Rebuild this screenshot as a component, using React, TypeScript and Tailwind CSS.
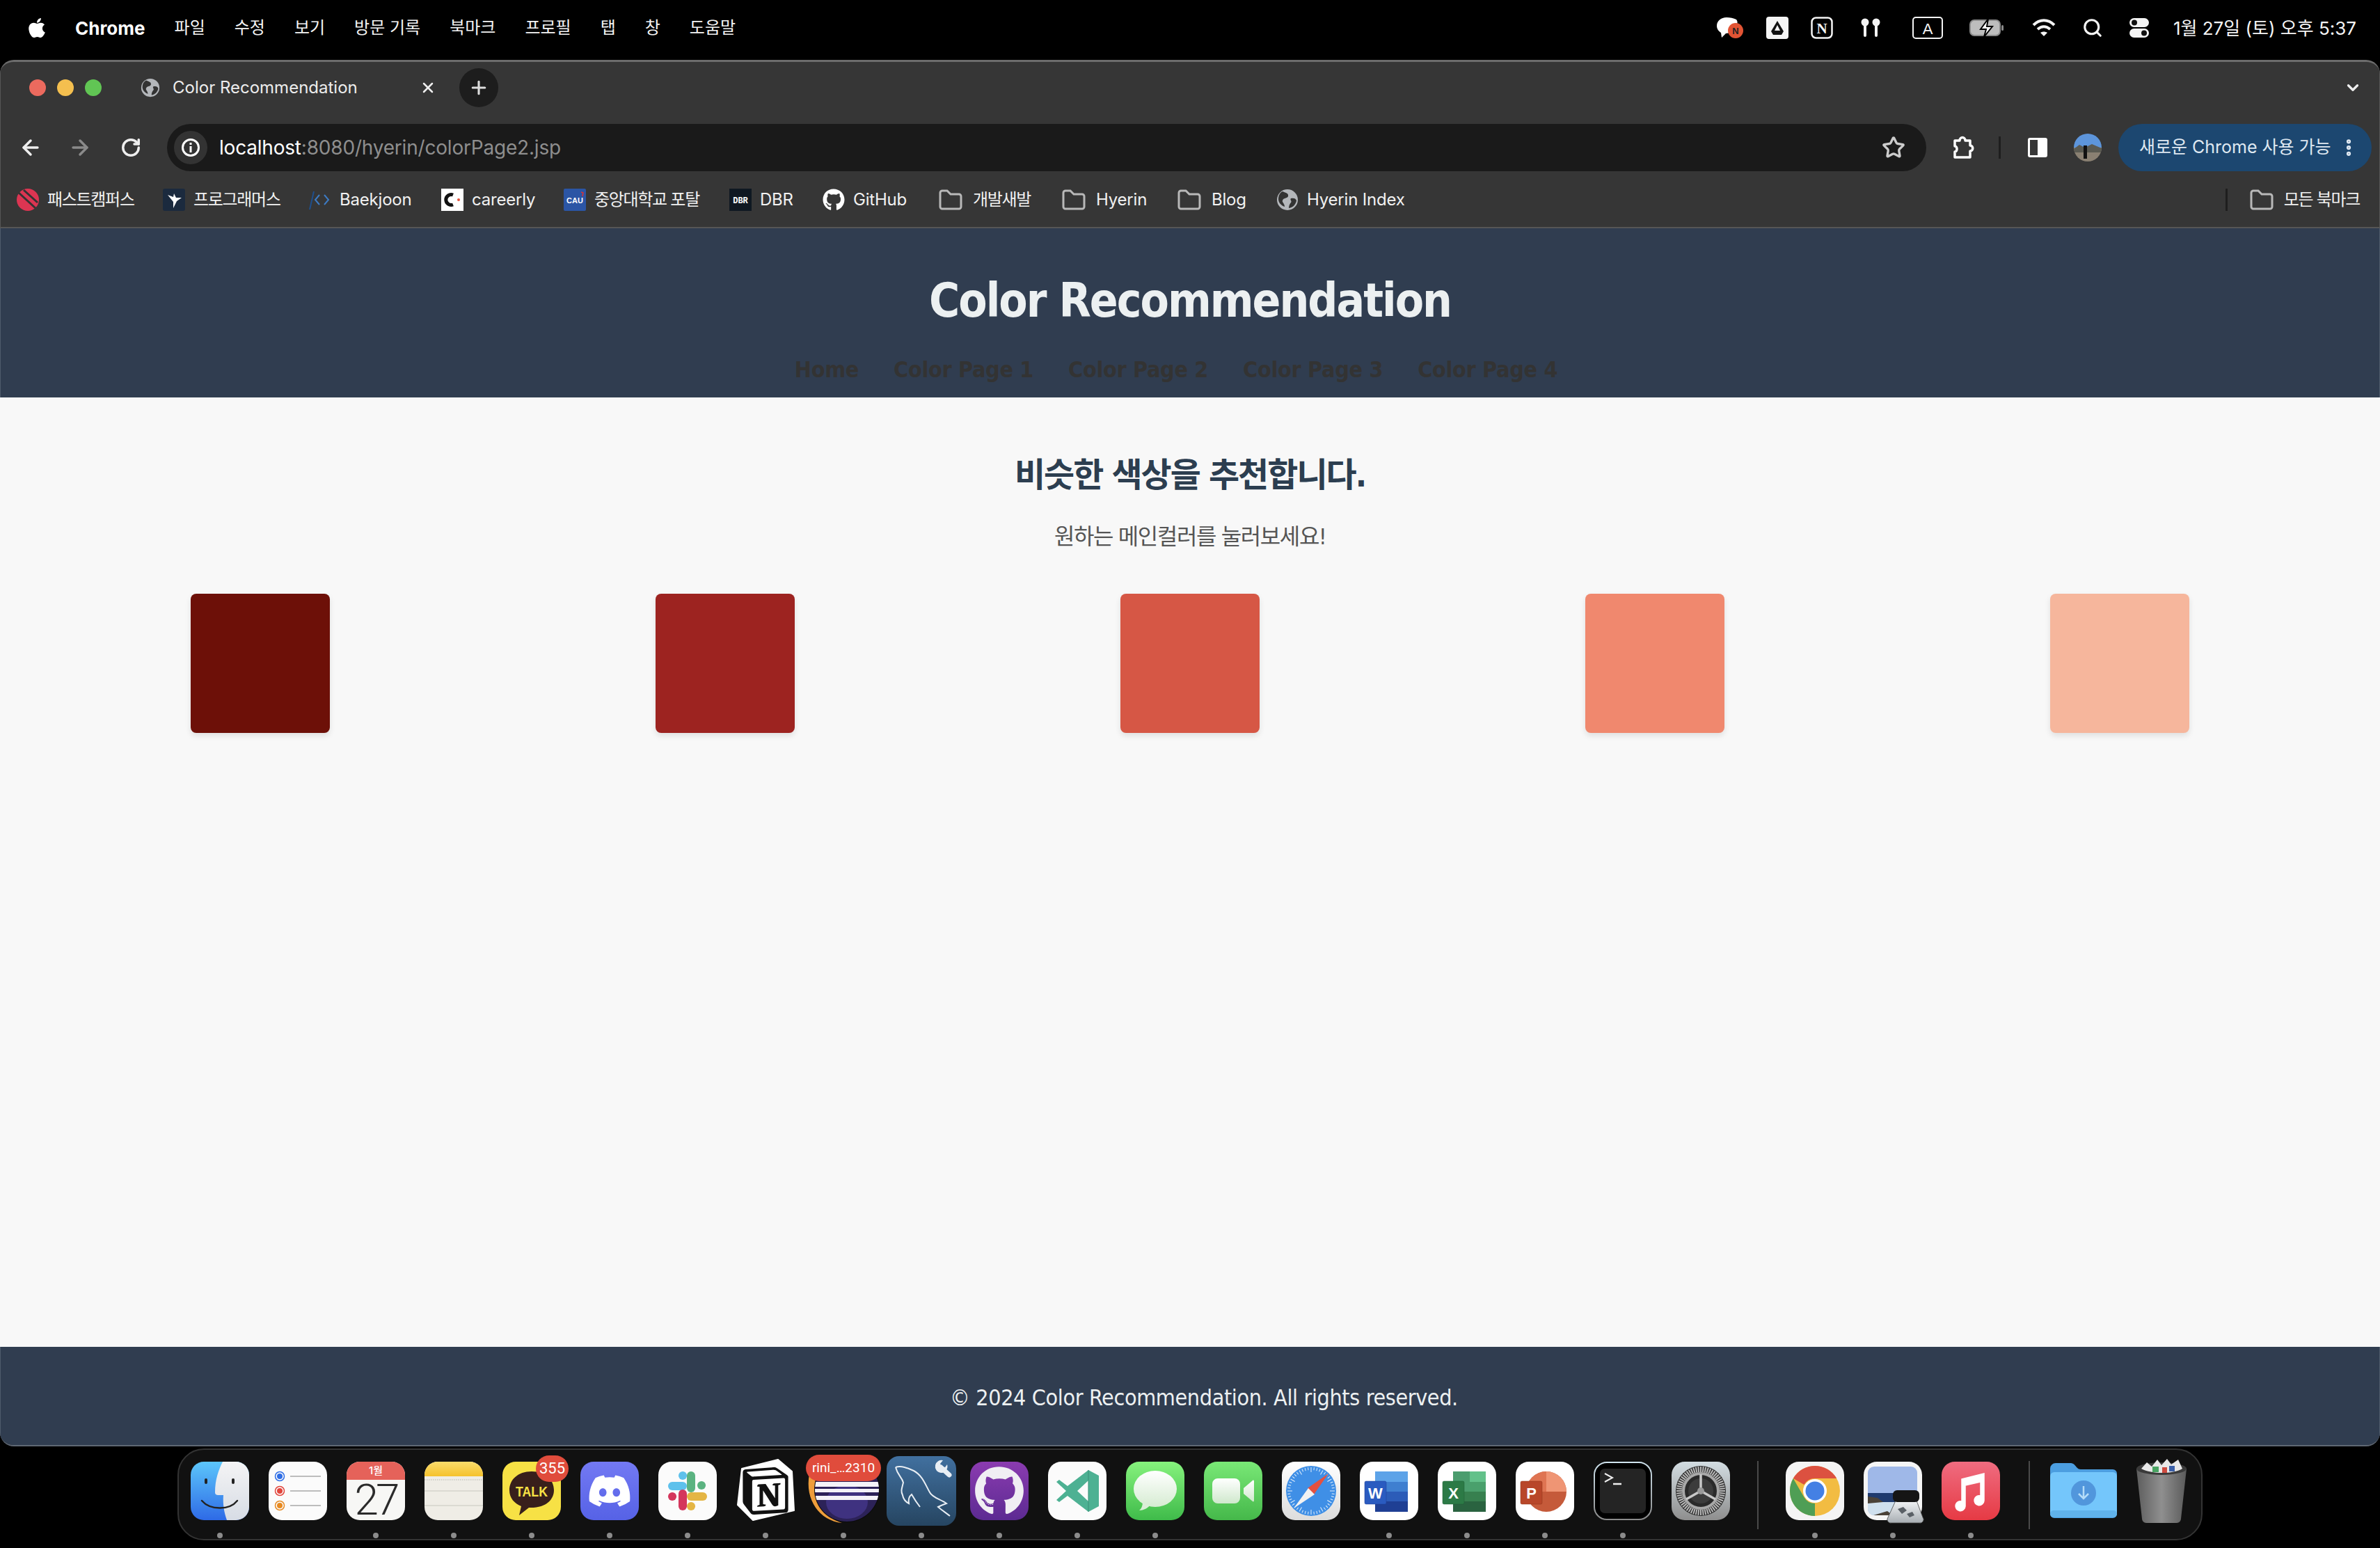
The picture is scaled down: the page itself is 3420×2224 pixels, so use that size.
import React from "react";
import { FaApple, FaGithub, FaDiscord } from "react-icons/fa";
import { SiNotion } from "react-icons/si";
import { ArrowLeft, ArrowRight, RotateCw, Star, ChevronDown, EllipsisVertical, Search, X, Plus } from "lucide-react";

const ui = "[font-family:'Inter','Noto_Sans_CJK_KR',sans-serif]";
const page = "[font-family:'DejaVu_Sans','Noto_Sans_CJK_KR',sans-serif] [font-stretch:condensed]";

function Globe({ size = 32 }: { size?: number }) {
  return (
    <svg width={size} height={size} viewBox="0 0 32 32">
      <circle cx="16" cy="16" r="15" fill="#b4b7bb" />
      <path d="M9 4c5 2 9 3 8 7-1 3-7 2-8 6-1 3 3 4 3 9-5-2-9-6-9-11 0-5 2-9 6-11zM21 14c4-1 7 0 8 3-1 6-5 10-11 11 0-3 1-6 3-8 2-2-2-4 0-6z" fill="#333" />
    </svg>
  );
}

function FolderIcon() {
  return (
    <svg width="34" height="32" viewBox="0 0 34 32" fill="none" stroke="#b8b8b8" strokeWidth="3">
      <path d="M2 6a3 3 0 0 1 3-3h7l5 5h12a3 3 0 0 1 3 3v15a3 3 0 0 1-3 3H5a3 3 0 0 1-3-3z" />
    </svg>
  );
}

function BmFast() {
  return (
    <svg width="32" height="32" viewBox="0 0 32 32">
      <circle cx="16" cy="16" r="16" fill="#dc3552" />
      <path d="M3 6l24 22M10 2l20 18" stroke="#333" strokeWidth="3" />
    </svg>
  );
}
function BmProg() {
  return (
    <svg width="32" height="32" viewBox="0 0 32 32">
      <rect width="32" height="32" rx="3" fill="#1b2a3e" />
      <path d="M7 9l8 3 1-5 3 6 8 0-7 5-5 10 0-9z" fill="#fff" />
    </svg>
  );
}
function BmBoj() {
  return (
    <svg width="32" height="32" viewBox="0 0 32 32" fill="none" strokeWidth="2">
      <path d="M7 4L1 30" stroke="#1f4f8c" />
      <path d="M15 9l-6 7 6 7M22 9l6 7-6 7" stroke="#3d7bc4" />
    </svg>
  );
}
function BmCareerly() {
  return (
    <svg width="32" height="32" viewBox="0 0 32 32">
      <rect width="32" height="32" fill="#fff" />
      <path d="M17 9a7.5 7.5 0 1 0 0 14" fill="none" stroke="#111" strokeWidth="5" />
      <circle cx="25" cy="16" r="2" fill="#e5533d" />
    </svg>
  );
}
function BmCau() {
  return (
    <svg width="32" height="32" viewBox="0 0 32 32">
      <rect width="32" height="32" rx="2" fill="#2b55a5" />
      <text x="16" y="21" textAnchor="middle" fontFamily="Liberation Sans" fontWeight="700" fontSize="11" fill="#fff">CAU</text>
      <path d="M25 5l3 1-1 5" stroke="#d33" strokeWidth="1.5" fill="none" />
    </svg>
  );
}
function BmDbr() {
  return (
    <svg width="32" height="32" viewBox="0 0 32 32">
      <rect width="32" height="32" fill="#0f1822" />
      <text x="16" y="21" textAnchor="middle" fontFamily="Liberation Mono" fontWeight="700" fontSize="12" fill="#fff">DBR</text>
    </svg>
  );
}

function Bm({ icon, label, w, gap = 12, ko = false }: { icon: React.ReactNode; label: string; w?: number; gap?: number; ko?: boolean }) {
  return (
    <div className="flex items-center shrink-0 text-[24px] leading-[32px] text-[#f1f1f1]" style={{ width: w, gap }}>
      {icon}
      <span className={`whitespace-nowrap ${ko ? "tracking-[-1.3px]" : "tracking-[-0.2px]"}`}>{label}</span>
    </div>
  );
}

const sq = 19;

function Finder() {
  return (
    <svg width="84" height="84" viewBox="0 0 84 84">
      <defs>
        <linearGradient id="fb" x1="0" y1="0" x2="0" y2="1"><stop offset="0" stopColor="#5cc6fb" /><stop offset="1" stopColor="#2e6ae6" /></linearGradient>
        <linearGradient id="fw" x1="0" y1="0" x2="0" y2="1"><stop offset="0" stopColor="#f4f4f5" /><stop offset="1" stopColor="#d7dce5" /></linearGradient>
        <clipPath id="fc"><rect width="84" height="84" rx={sq} /></clipPath>
      </defs>
      <g clipPath="url(#fc)">
        <rect width="84" height="84" fill="url(#fb)" />
        <path d="M46 0C40 12 35 26 35 44c0 3 2 4 5 4h7c-1 13 1 25 5 36h32V0z" fill="url(#fw)" />
      </g>
      <rect x="20" y="24" width="4" height="8" rx="2" fill="#222" />
      <rect x="59" y="24" width="4" height="8" rx="2" fill="#222" />
      <path d="M16 56c12 14 40 14 51 0" fill="none" stroke="#222" strokeWidth="2.4" strokeLinecap="round" />
    </svg>
  );
}
function Reminders() {
  const rows: [number, string][] = [[21, "#2f6ee6"], [42, "#e2453c"], [63, "#e78a22"]];
  return (
    <svg width="84" height="84" viewBox="0 0 84 84">
      <rect width="84" height="84" rx={sq} fill="#fbfbfb" />
      {rows.map(([y, c]) => (
        <g key={y}>
          <circle cx="16" cy={y} r="6.5" fill="none" stroke={c} strokeWidth="1.5" />
          <circle cx="16" cy={y} r="4" fill={c} />
          <rect x="31" y={y - 1} width="44" height="2" fill="#bdbdbd" />
        </g>
      ))}
    </svg>
  );
}
function Calendar() {
  return (
    <div className="w-[84px] h-[84px] rounded-[19px] bg-[#f7f7f5] flex flex-col items-center">
      <div className="w-full h-[26px] shrink-0 rounded-t-[19px] bg-[#e5625a] text-white text-[15px] leading-[26px] text-center font-medium">1월</div>
      <div className="h-[58px] text-[#2b2b2b] text-[62px] leading-[58px] font-light tracking-[-4px] [font-family:'Roboto',sans-serif]">27</div>
    </div>
  );
}
function Notes() {
  return (
    <svg width="84" height="84" viewBox="0 0 84 84">
      <defs>
        <clipPath id="nc"><rect width="84" height="84" rx={sq} /></clipPath>
        <linearGradient id="ny" x1="0" y1="0" x2="0" y2="1"><stop offset="0" stopColor="#fbdc6c" /><stop offset="1" stopColor="#f5c22c" /></linearGradient>
      </defs>
      <g clipPath="url(#nc)">
        <rect width="84" height="84" fill="#efede6" />
        <rect width="84" height="21" fill="url(#ny)" />
        <path d="M0 26h84" stroke="#c8c6c0" strokeWidth="1.5" strokeDasharray="1.5 1.5" />
        <path d="M0 42h84M0 63h84" stroke="#d5d3cc" strokeWidth="1.5" />
      </g>
    </svg>
  );
}
function Kakao() {
  return (
    <svg width="84" height="84" viewBox="0 0 84 84">
      <rect width="84" height="84" rx={sq} fill="#f7e145" />
      <path d="M42 14c-20 0-32 12-32 27 0 11 7 19 17 23l-3 13 14-11c25 1 36-12 36-25 0-15-12-27-32-27z" fill="#381f1b" />
      <text x="42" y="50" textAnchor="middle" fontSize="21" fontWeight="700" fill="#f7e145" fontFamily="Liberation Sans" textLength="46" lengthAdjust="spacingAndGlyphs">TALK</text>
    </svg>
  );
}
function Discord() {
  return (
    <div className="w-[84px] h-[84px] rounded-[19px] bg-gradient-to-b from-[#7379f3] to-[#5662e6] flex items-center justify-center">
      <FaDiscord size={64} color="#fff" />
    </div>
  );
}
function Slack() {
  return (
    <svg width="84" height="84" viewBox="0 0 84 84">
      <rect width="84" height="84" rx={sq} fill="#fbfbfb" />
      <g strokeLinecap="round" strokeWidth="12" fill="none">
        <path d="M47 20v18" stroke="#5bb381" /><path d="M62 34h.1" stroke="#5bb381" />
        <path d="M20 35h15" stroke="#5ec1ec" /><path d="M35 20h.1" stroke="#5ec1ec" />
        <path d="M35 46v18" stroke="#d4365c" /><path d="M20 50h.1" stroke="#d4365c" />
        <path d="M47 50h17" stroke="#e4b544" /><path d="M47 64h.1" stroke="#e4b544" />
      </g>
    </svg>
  );
}
function Notion() {
  return (
    <div className="relative w-[84px] h-[84px] flex items-center justify-center">
      <svg className="absolute left-0 top-0 overflow-visible" width="84" height="84" viewBox="0 0 84 84">
        <polygon points="8,10 60,-3 80,14 83,70 24,84 2,62" fill="#fff" stroke="#fff" strokeWidth="2" strokeLinejoin="round" />
      </svg>
      <SiNotion size={68} color="#111" className="relative" />
    </div>
  );
}
function Eclipse() {
  return (
    <svg width="84" height="84" viewBox="0 0 84 84" className="overflow-visible">
      <defs>
        <clipPath id="ec"><circle cx="47" cy="40" r="46" /></clipPath>
      </defs>
      <path d="M-7 18C-14 55 8 85 40 88 14 80-4 55 3 18z" fill="#ee9d3b" />
      <circle cx="47" cy="40" r="47" fill="#0b0b0b" />
      <g clipPath="url(#ec)">
        <rect x="0" y="-8" width="100" height="96" fill="#2c2258" />
        <ellipse cx="47" cy="58" rx="30" ry="24" fill="#3f3280" />
        <rect x="0" y="29" width="100" height="7" fill="#f4f3f8" />
        <rect x="0" y="39" width="100" height="5" fill="#f4f3f8" />
        <rect x="0" y="49" width="100" height="6" fill="#f4f3f8" />
      </g>
    </svg>
  );
}
function MySql() {
  return (
    <svg width="100" height="100" viewBox="0 0 100 100">
      <defs><linearGradient id="my" x1="0" y1="0" x2="0" y2="1"><stop offset="0" stopColor="#41709f" /><stop offset="1" stopColor="#264561" /></linearGradient></defs>
      <rect width="100" height="100" rx="18" fill="url(#my)" />
      <path d="M13 16C22 13 32 18 39 21 52 28 56 42 62 52 66 60 78 62 86 68 80 70 76 72 74 73 80 78 86 82 91 86" fill="none" stroke="#e8eef4" strokeWidth="2" />
      <path d="M13 16C16 28 22 30 24 38 22 46 20 50 23 56 24 62 28 66 32 68 31 62 32 58 36 55 40 62 44 68 48 73" fill="none" stroke="#e8eef4" strokeWidth="2" />
      <path d="M78 16L90 27" stroke="#e8eef4" strokeWidth="7" strokeLinecap="round" />
      <path d="M70 13a9 9 0 0 1 11-7l-4 5 2 4 5 1 3-4a9 9 0 0 1-9 12 9 9 0 0 1-8-11z" fill="#e8eef4" />
    </svg>
  );
}
function GitHubDock() {
  return (
    <div className="w-[84px] h-[84px] rounded-[19px] bg-gradient-to-b from-[#8b3bb0] to-[#5c2a92] flex items-center justify-center">
      <FaGithub size={72} color="#f0eef3" />
    </div>
  );
}
function VsCode() {
  return (
    <svg width="84" height="84" viewBox="0 0 84 84">
      <rect width="84" height="84" rx={sq} fill="#fbfbfb" />
      <path d="M58 12l15 8v44l-15 8-30-23-12 9-4-3 14-13-14-13 4-3 12 9zM58 27L42 42l16 15z" fill="#4db193" fillRule="evenodd" />
      <path d="M58 12v60" stroke="#3a8f77" strokeWidth="1" />
    </svg>
  );
}
function Messages() {
  return (
    <svg width="84" height="84" viewBox="0 0 84 84">
      <defs>
        <linearGradient id="ms" x1="0" y1="0" x2="0" y2="1"><stop offset="0" stopColor="#86f27d" /><stop offset="1" stopColor="#3fbb4a" /></linearGradient>
        <linearGradient id="mb" x1="0" y1="0" x2="0" y2="1"><stop offset="0" stopColor="#fff" /><stop offset="1" stopColor="#d6ecd2" /></linearGradient>
      </defs>
      <rect width="84" height="84" rx={sq} fill="url(#ms)" />
      <ellipse cx="42" cy="39" rx="31" ry="26" fill="url(#mb)" />
      <path d="M24 58c0 5-2 10-5 12 6 0 12-3 15-7z" fill="#dbeed8" />
    </svg>
  );
}
function FaceTime() {
  return (
    <svg width="84" height="84" viewBox="0 0 84 84">
      <defs>
        <linearGradient id="ft" x1="0" y1="0" x2="0" y2="1"><stop offset="0" stopColor="#79e876" /><stop offset="1" stopColor="#45b84a" /></linearGradient>
        <linearGradient id="fv" x1="0" y1="0" x2="0" y2="1"><stop offset="0" stopColor="#fff" /><stop offset="1" stopColor="#cfe8cc" /></linearGradient>
      </defs>
      <rect width="84" height="84" rx={sq} fill="url(#ft)" />
      <rect x="12" y="24" width="40" height="36" rx="8" fill="url(#fv)" />
      <path d="M57 38l13-11c1-1 2 0 2 1v28c0 1-1 2-2 1L57 46z" fill="url(#fv)" />
    </svg>
  );
}
function Safari() {
  const ticks = Array.from({ length: 48 }, (_, i) => i * 7.5);
  return (
    <svg width="84" height="84" viewBox="0 0 84 84">
      <defs><linearGradient id="sf" x1="0" y1="0" x2="0" y2="1"><stop offset="0" stopColor="#fff" /><stop offset="1" stopColor="#dcdcdc" /></linearGradient></defs>
      <rect width="84" height="84" rx={sq} fill="url(#sf)" />
      <circle cx="42" cy="42" r="36" fill="#3f8fe6" />
      {ticks.map((a) => (
        <rect key={a} x="41.5" y="8" width="1" height={a % 30 === 0 ? 7 : 4} fill="#e4f0fb" transform={`rotate(${a} 42 42)`} />
      ))}
      <path d="M67 17L37 38l9 9z" fill="#e4503f" />
      <path d="M17 67l30-20-9-9z" fill="#f2f2f2" />
    </svg>
  );
}
function Office({ dark, tile, letter, kind }: { dark: string; tile: string; letter: string; kind: "word" | "excel" | "ppt" }) {
  return (
    <svg width="84" height="84" viewBox="0 0 84 84">
      <rect width="84" height="84" rx={sq} fill="#fff" />
      {kind === "word" && (
        <g>
          <rect x="22" y="14" width="47" height="15" fill="#5da3e8" />
          <rect x="22" y="29" width="47" height="14" fill="#3f7fd0" />
          <rect x="22" y="43" width="47" height="14" fill="#2c5cb8" />
          <rect x="22" y="57" width="47" height="15" fill="#1f3f94" />
        </g>
      )}
      {kind === "excel" && (
        <g>
          <rect x="22" y="14" width="24" height="29" fill="#4b9d6e" />
          <rect x="46" y="14" width="23" height="15" fill="#63c18a" />
          <rect x="46" y="29" width="23" height="14" fill="#4aa06c" />
          <rect x="22" y="43" width="47" height="14" fill="#37804f" />
          <rect x="22" y="57" width="47" height="15" fill="#2a6340" />
        </g>
      )}
      {kind === "ppt" && (
        <g>
          <circle cx="44" cy="43" r="29" fill="#c55a3a" />
          <path d="M44 14a29 29 0 0 1 29 29H44z" fill="#ef9574" />
          <path d="M44 14v29H15a29 29 0 0 1 29-29z" fill="#df7452" />
        </g>
      )}
      <rect x="7" y="28" width="31" height="33" rx="2" fill={tile} stroke={dark} strokeWidth="0.5" />
      <text x="22.5" y="53" textAnchor="middle" fontFamily="Liberation Sans" fontWeight="700" fontSize="22" fill="#fff">{letter}</text>
    </svg>
  );
}
function Terminal() {
  return (
    <svg width="84" height="84" viewBox="0 0 84 84">
      <defs><linearGradient id="tb" x1="0" y1="0" x2="0" y2="1"><stop offset="0" stopColor="#cfe3ee" /><stop offset="1" stopColor="#8a8a8a" /></linearGradient></defs>
      <rect x="1" y="1" width="82" height="82" rx="18" fill="#000" stroke="url(#tb)" strokeWidth="2" />
      <rect x="9" y="10" width="66" height="64" rx="7" fill="#242424" />
      <path d="M16 17l11 6-11 6" fill="none" stroke="#eee" strokeWidth="2" />
      <path d="M28 32h12" stroke="#eee" strokeWidth="2.5" />
    </svg>
  );
}
function Settings() {
  const ticks = Array.from({ length: 60 }, (_, i) => i * 6);
  return (
    <svg width="84" height="84" viewBox="0 0 84 84">
      <defs><linearGradient id="st" x1="0" y1="0" x2="0" y2="1"><stop offset="0" stopColor="#d3dde2" /><stop offset="1" stopColor="#8e8e8e" /></linearGradient></defs>
      <rect width="84" height="84" rx={sq} fill="url(#st)" />
      <circle cx="42" cy="42" r="36" fill="#2a2a2a" />
      {ticks.map((a) => (
        <rect key={a} x="41" y="7" width="2" height="8" fill="#b8b8b8" transform={`rotate(${a} 42 42)`} />
      ))}
      <circle cx="42" cy="42" r="25" fill="none" stroke="#a8a8a8" strokeWidth="4" />
      <circle cx="42" cy="42" r="18" fill="#3c3c3c" />
      <path d="M42 42V18M42 42L21 54M42 42l21 12" stroke="#c8c8c8" strokeWidth="3.5" />
      <circle cx="42" cy="42" r="5" fill="#9a9a9a" />
    </svg>
  );
}
function ChromeDock() {
  return (
    <svg width="84" height="84" viewBox="0 0 84 84">
      <rect width="84" height="84" rx={sq} fill="#f4f4f4" />
      <circle cx="42" cy="42" r="36" fill="#f2bc42" />
      <path d="M42 6a36 36 0 0 1 31.2 18H42a18 18 0 0 0-15.6 9L10.8 24A36 36 0 0 1 42 6z" fill="#dc5140" />
      <path d="M10.8 24l15.6 27a18 18 0 0 0 15.6 9L42 78A36 36 0 0 1 10.8 24z" fill="#4f9e55" />
      <circle cx="42" cy="42" r="17" fill="#fff" />
      <circle cx="42" cy="42" r="13.5" fill="#4480e4" />
    </svg>
  );
}
function Preview() {
  return (
    <svg width="84" height="84" viewBox="0 0 84 84" className="overflow-visible">
      <defs>
        <clipPath id="pc"><rect x="6" y="7" width="71" height="70" rx="9" /></clipPath>
        <linearGradient id="pg" x1="0" y1="0" x2="0" y2="1"><stop offset="0" stopColor="#f2f4f6" /><stop offset="1" stopColor="#a7adb2" /></linearGradient>
      </defs>
      <rect width="84" height="84" rx={sq} fill="#f5f5f5" />
      <g clipPath="url(#pc)">
        <rect x="6" y="7" width="71" height="70" fill="#9fb8e8" />
        <rect x="6" y="45" width="71" height="13" fill="#1f3a6e" />
        <rect x="6" y="58" width="71" height="19" fill="#cfe0ee" />
        <path d="M6 50l14 2 8 6-22 2zM14 77l20-6 8 6z" fill="#4a4238" />
      </g>
      <path d="M46 56h30l9 24a5 5 0 0 1-5 8H40a5 5 0 0 1-5-8z" fill="url(#pg)" stroke="#444" strokeWidth="0.8" />
      <rect x="42" y="41" width="38" height="17" rx="6" fill="#151515" />
      <path d="M49 68l8-3 5 5-7 5zM62 75l8-3 3 5-7 3z" fill="#5a6066" />
    </svg>
  );
}
function Music() {
  return (
    <svg width="84" height="84" viewBox="0 0 84 84">
      <defs><linearGradient id="mu" x1="0" y1="0" x2="0" y2="1"><stop offset="0" stopColor="#ef6c80" /><stop offset="1" stopColor="#e63a44" /></linearGradient></defs>
      <rect width="84" height="84" rx={sq} fill="url(#mu)" />
      <path d="M29 25L61 17v39a7 7 0 1 1-5-7V29l-22 5v30a7 7 0 1 1-5-7z" fill="#fff" stroke="#fff" strokeWidth="1.5" />
    </svg>
  );
}
function DlFolder() {
  return (
    <svg width="96" height="84" viewBox="0 0 96 84">
      <path d="M0 10a8 8 0 0 1 8-8h21c4 0 6 2 9 6 2 2 3 3 6 3h46a6 6 0 0 1 6 6v58a6 6 0 0 1-6 6H6a6 6 0 0 1-6-6z" fill="#4c9ee0" />
      <rect y="15" width="96" height="65" rx="6" fill="#74c6fb" />
      <rect y="70" width="96" height="10" rx="5" fill="#60b2ea" />
      <ellipse cx="48" cy="45" rx="18" ry="18" fill="#5196dc" />
      <path d="M48 35v18M41 46l7 7 7-7" fill="none" stroke="#b4dcf8" strokeWidth="2.5" />
    </svg>
  );
}
function Trash() {
  return (
    <svg width="74" height="96" viewBox="0 0 74 96" className="overflow-visible">
      <defs><linearGradient id="tr" x1="0" y1="0" x2="1" y2="0"><stop offset="0" stopColor="#5d5d5d" /><stop offset=".5" stopColor="#8f8f8f" /><stop offset="1" stopColor="#5a5a5a" /></linearGradient></defs>
      <path d="M1 16h72l-8 72a6 6 0 0 1-6 6H15a6 6 0 0 1-6-6z" fill="url(#tr)" />
      <ellipse cx="37" cy="16" rx="36" ry="9" fill="#3a3a3a" />
      <path d="M8 16l8-9 7 6 8-10 6 8 8-9 6 8 10-7 6 13c-14 8-44 8-59 0z" fill="#e8e8e8" />
      <rect x="24" y="13" width="9" height="8" fill="#49a362" /><rect x="38" y="14" width="7" height="8" fill="#cd4a3f" /><rect x="48" y="12" width="8" height="8" fill="#3a5fa8" />
    </svg>
  );
}

function Dock({ children, dot = true, w = 84, ml = 28, badge }: { children: React.ReactNode; dot?: boolean; w?: number; ml?: number; badge?: React.ReactNode }) {
  return (
    <div className="relative flex flex-col items-center shrink-0" style={{ width: w, marginLeft: ml }}>
      <div className="h-[84px] flex items-center justify-center">{children}</div>
      <div className={`mt-[18px] w-[8px] h-[8px] rounded-full ${dot ? "bg-[#8c8c8c]" : "bg-transparent"}`} />
      {badge}
    </div>
  );
}

function Badge({ text, className }: { text: string; className: string }) {
  return (
    <div className={`absolute h-[38px] rounded-full bg-[#e04c3c] text-white leading-[38px] text-center [font-family:'Roboto',sans-serif] ${className}`}>{text}</div>
  );
}

function Divider({ ml }: { ml: number }) {
  return <div className="w-[2px] h-[98px] bg-[#4a4a4a] shrink-0 -mt-[1px]" style={{ marginLeft: ml }} />;
}

export default function App() {
  const colors = ["#6d1008", "#9d2320", "#d65745", "#f0886e", "#f6b69c"];
  const menus = ["파일", "수정", "보기", "방문 기록", "북마크", "프로필", "탭", "창", "도움말"];
  const navs = ["Home", "Color Page 1", "Color Page 2", "Color Page 3", "Color Page 4"];
  return (
    <div className={`w-[3420px] h-[2224px] bg-black flex flex-col overflow-hidden ${ui}`}>
      {/* menu bar */}
      <div className="h-[86px] shrink-0 flex items-center pl-[37px] pr-[34px] text-white pb-[6px]">
        <FaApple size={32} />
        <span className="ml-[39px] text-[26px] font-bold">Chrome</span>
        <div className="ml-[42px] flex gap-[42px] text-[24px] text-[#f4f4f4]">
          {menus.map((m) => <span key={m} className="whitespace-nowrap">{m}</span>)}
        </div>
        <div className="ml-auto flex items-center">
          <svg width="38" height="32" viewBox="0 0 38 32">
            <path d="M14 1C6 1 0 6 0 13c0 5 3 8 6 10l1 7 6-6c3 0 6-1 9-3 6-8 10-12 6-17-4-2-9-3-14-3z" fill="#fff" />
            <circle cx="27" cy="20" r="11" fill="#e25434" />
            <text x="27" y="25" textAnchor="middle" fontSize="13" fontWeight="700" fill="#222" fontFamily="Liberation Sans">N</text>
          </svg>
          <svg className="ml-[33px]" width="32" height="32" viewBox="0 0 32 32">
            <rect width="32" height="32" rx="4" fill="#f4f4f4" />
            <path d="M16 6l9 15-3 5H10l-3-5z" fill="#111" />
            <path d="M16 12l4 8h-8z" fill="#f4f4f4" />
          </svg>
          <svg className="ml-[32px]" width="32" height="32" viewBox="0 0 32 32">
            <rect x="1.5" y="1.5" width="29" height="29" rx="6" fill="none" stroke="#f4f4f4" strokeWidth="2.5" />
            <text x="16" y="24" textAnchor="middle" fontSize="21" fontWeight="700" fill="#f4f4f4" fontFamily="Liberation Serif">N</text>
          </svg>
          <svg className="ml-[40px]" width="28" height="28" viewBox="0 0 28 28" fill="#f4f4f4">
            <circle cx="6" cy="6" r="5.5" /><circle cx="22" cy="6" r="5.5" />
            <rect x="4" y="6" width="4" height="21" rx="2" /><rect x="20" y="6" width="4" height="21" rx="2" />
          </svg>
          <svg className="ml-[46px]" width="44" height="32" viewBox="0 0 44 32">
            <rect x="1" y="1" width="42" height="30" rx="4" fill="none" stroke="#f4f4f4" strokeWidth="2" />
            <text x="22" y="25" textAnchor="middle" fontSize="22" fill="#f4f4f4" fontFamily="Liberation Sans">A</text>
          </svg>
          <svg className="ml-[38px]" width="50" height="26" viewBox="0 0 50 26">
            <rect x="1" y="2" width="43" height="22" rx="6" fill="#bdbdbd" stroke="#8a8a8a" strokeWidth="2" />
            <rect x="46" y="9" width="3" height="8" rx="1.5" fill="#8a8a8a" />
            <path d="M27 0L16 15h8l-3 11 12-15h-8z" fill="#fff" stroke="#000" strokeWidth="2" />
          </svg>
          <svg className="ml-[40px]" width="34" height="26" viewBox="0 0 34 26" fill="none" stroke="#f4f4f4" strokeWidth="4">
            <path d="M2 9c9-9 21-9 30 0M8 15c6-5 12-5 18 0" />
            <path d="M17 25l-5-5c3-2 7-2 10 0z" fill="#f4f4f4" stroke="none" />
          </svg>
          <Search className="ml-[38px]" size={30} strokeWidth={2.5} color="#f4f4f4" />
          <svg className="ml-[38px]" width="28" height="28" viewBox="0 0 28 28">
            <rect y="0" width="28" height="13" rx="6.5" fill="#f4f4f4" />
            <circle cx="7" cy="6.5" r="4" fill="#111" />
            <rect y="15" width="28" height="13" rx="6.5" fill="#f4f4f4" />
            <circle cx="21" cy="21.5" r="4" fill="#111" />
          </svg>
          <span className="ml-[35px] text-[26px] text-[#f4f4f4] whitespace-nowrap">1월 27일 (토) 오후 5:37</span>
        </div>
      </div>

      {/* browser window */}
      <div className="h-[1992px] shrink-0 rounded-[20px] overflow-hidden border-t-[3px] border-t-[#6c6c6c] border-b-[2px] border-b-[#5f6874] flex flex-col bg-[#363636]">
        <div className="shrink-0 border-x border-[#565656]">
          <div className="h-[74px] flex items-center pl-[41px] pr-[25px]">
            <div className="flex gap-[16px]">
              <div className="w-[24px] h-[24px] rounded-full bg-[#ec6a5e]" />
              <div className="w-[24px] h-[24px] rounded-full bg-[#f4bf4f]" />
              <div className="w-[24px] h-[24px] rounded-full bg-[#61c554]" />
            </div>
            <div className="ml-[56px]"><Globe size={28} /></div>
            <span className="ml-[18px] text-[24px] text-[#ececec] whitespace-nowrap w-[355px]">Color Recommendation</span>
            <X size={24} color="#eee" strokeWidth={2.5} />
            <div className="ml-[33px] w-[56px] h-[56px] rounded-full bg-[#1d1d1d] flex items-center justify-center">
              <Plus size={30} color="#ddd" strokeWidth={2.5} />
            </div>
            <ChevronDown size={26} color="#eee" strokeWidth={3} className="ml-auto" />
          </div>

          <div className="mt-[8px] h-[82px] flex items-center pl-[26px] pr-[10px]">
            <ArrowLeft size={34} color="#eee" strokeWidth={2.5} />
            <ArrowRight size={34} color="#8a8a8a" strokeWidth={2.5} className="ml-[37px]" />
            <RotateCw size={30} color="#eee" strokeWidth={2.8} className="ml-[41px]" />
            <div className="ml-[37px] w-[2528px] h-[68px] rounded-full bg-[#1a1a1a] flex items-center pl-[10px] pr-[30px]">
              <div className="w-[48px] h-[48px] rounded-full bg-[#333] flex items-center justify-center">
                <svg width="28" height="28" viewBox="0 0 28 28" fill="none" stroke="#fff" strokeWidth="3">
                  <circle cx="14" cy="14" r="11.5" />
                  <path d="M14 12v9M14 7v3" />
                </svg>
              </div>
              <span className="ml-[17px] text-[28px] tracking-[-0.2px] text-white whitespace-nowrap">localhost<span className="text-[#8e8e8e]">:8080/hyerin/colorPage2.jsp</span></span>
              <Star size={34} color="#ccc" strokeWidth={2.4} className="ml-auto" />
            </div>
            <svg className="ml-[36px]" width="36" height="36" viewBox="0 0 36 36" fill="none" stroke="#fff" strokeWidth="3.5" strokeLinejoin="round">
              <path d="M5 8h7c0-6 8-6 8 0h7v7c5 0 5 8 0 8v9H5v-8c4 0 4-8 0-8z" />
            </svg>
            <div className="ml-[32px] w-[3px] h-[32px] bg-[#1e1e1e]" />
            <div className="ml-[39px] w-[28px] h-[28px] rounded-[3px] border-[3px] border-white flex justify-end">
              <div className="w-[11px] h-full bg-white" />
            </div>
            <svg className="ml-[38px]" width="40" height="40" viewBox="0 0 40 40">
              <defs><clipPath id="av"><circle cx="20" cy="20" r="20" /></clipPath></defs>
              <g clipPath="url(#av)">
                <rect width="40" height="20" fill="#5d95db" />
                <rect y="20" width="40" height="20" fill="#8a8072" />
                <path d="M0 22l8-6 8 4 10-5 14 6v6H0z" fill="#5a5a52" />
                <rect x="14" y="17" width="5" height="19" fill="#111" />
              </g>
            </svg>
            <div className="ml-[24px] w-[364px] h-[68px] rounded-full bg-[#1c4770] flex items-center pl-[30px] pr-[18px] justify-between">
              <span className="text-[25px] text-[#dfe8f1] whitespace-nowrap">새로운 Chrome 사용 가능</span>
              <EllipsisVertical size={30} color="#dfe8f1" strokeWidth={3} />
            </div>
          </div>

          <div className="h-[75px] flex items-center pl-[23px] pr-[28px] pb-[5px] border-b-[2px] border-[#565656]">
            <Bm ko w={210} icon={<BmFast />} label="패스트캠퍼스" />
            <Bm ko w={210} icon={<BmProg />} label="프로그래머스" />
            <Bm w={190} icon={<BmBoj />} label="Baekjoon" />
            <Bm w={176} icon={<BmCareerly />} label="careerly" />
            <Bm ko w={238} icon={<BmCau />} label="중앙대학교 포탈" />
            <Bm w={134} icon={<BmDbr />} label="DBR" />
            <Bm w={167} icon={<FaGithub size={32} color="#fff" />} label="GitHub" />
            <Bm ko w={177} icon={<FolderIcon />} label="개발새발" gap={15} />
            <Bm w={166} icon={<FolderIcon />} label="Hyerin" gap={15} />
            <Bm w={142} icon={<FolderIcon />} label="Blog" gap={15} />
            <Bm icon={<Globe />} label="Hyerin Index" />
            <div className="ml-auto w-[3px] h-[32px] bg-[#1e1e1e]" />
            <div className="ml-[32px]"><Bm ko icon={<FolderIcon />} label="모든 북마크" gap={15} /></div>
          </div>
        </div>

        {/* page */}
        <div className={`flex-1 flex flex-col ${page}`}>
          <header className="h-[243px] shrink-0 bg-[#303d50] border-x border-[#4f5b6b] flex flex-col items-center">
            <h1 className="mt-[62px] text-[67px] leading-[84px] font-bold tracking-[-2px] text-[#ecf0f1]">Color Recommendation</h1>
            <nav className="mt-[35px] pr-[40px] flex gap-[50px] text-[32px] leading-[44px] font-bold tracking-[-0.3px] text-[#333]">
              {navs.map((n) => <span key={n}>{n}</span>)}
            </nav>
          </header>
          <main className="flex-1 bg-[#f8f8f8] flex flex-col items-center pt-[78px]">
            <h2 className="text-[48px] leading-[66px] font-bold text-[#2c3e50] tracking-[-2px]">비슷한 색상을 추천합니다.</h2>
            <p className="mt-[34px] text-[32px] leading-[44px] text-[#555] tracking-[-1.4px]">원하는 메인컬러를 눌러보세요!</p>
            <div className="mt-[60px] w-full px-[40px] flex justify-around">
              {colors.map((c) => (
                <div key={c} className="w-[200px] h-[200px] rounded-[8px] shadow-[0_4px_8px_rgba(0,0,0,0.1)]" style={{ backgroundColor: c }} />
              ))}
            </div>
          </main>
          <footer className="h-[141px] shrink-0 bg-[#303d50] border-x border-[#4f5b6b] flex items-center justify-center pt-[4px] pl-[40px] text-[32px] tracking-[-0.37px] text-[#ecf0f1]">
            © 2024 Color Recommendation. All rights reserved.
          </footer>
        </div>
      </div>

      {/* dock */}
      <div className="ml-[255px] mt-[3px] w-[2910px] h-[132px] shrink-0 rounded-[38px] bg-[#111] border-[2px] border-[#333] flex items-start pt-[17px] pl-[17px]">
        <Dock ml={0}><Finder /></Dock>
        <Dock dot={false}><Reminders /></Dock>
        <Dock><Calendar /></Dock>
        <Dock><Notes /></Dock>
        <Dock badge={<Badge text="355" className="top-[-9px] right-[-11px] w-[47px] text-[22px]" />}><Kakao /></Dock>
        <Dock><Discord /></Dock>
        <Dock><Slack /></Dock>
        <Dock><Notion /></Dock>
        <Dock badge={<Badge text="rini_…2310" className="top-[-10px] left-[-12px] w-[108px] text-[19px] whitespace-nowrap" />}><Eclipse /></Dock>
        <Dock><MySql /></Dock>
        <Dock><GitHubDock /></Dock>
        <Dock><VsCode /></Dock>
        <Dock><Messages /></Dock>
        <Dock dot={false}><FaceTime /></Dock>
        <Dock dot={false}><Safari /></Dock>
        <Dock><Office kind="word" dark="#1e3f94" tile="#2a5bc0" letter="W" /></Dock>
        <Dock><Office kind="excel" dark="#1d5c37" tile="#2c7a46" letter="X" /></Dock>
        <Dock><Office kind="ppt" dark="#8f3518" tile="#b8472a" letter="P" /></Dock>
        <Dock><Terminal /></Dock>
        <Dock dot={false}><Settings /></Dock>
        <Divider ml={39} />
        <Dock ml={39}><ChromeDock /></Dock>
        <Dock><Preview /></Dock>
        <Dock><Music /></Dock>
        <Divider ml={41} />
        <Dock dot={false} w={96} ml={29}><DlFolder /></Dock>
        <Dock dot={false} w={74} ml={27}><Trash /></Dock>
      </div>
    </div>
  );
}
